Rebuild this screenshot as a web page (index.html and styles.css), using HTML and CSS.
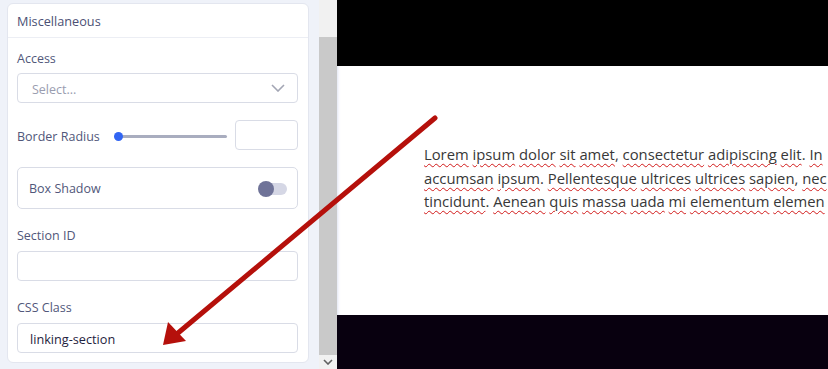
FILE: index.html
```
<!DOCTYPE html>
<html>
<head>
<meta charset="utf-8">
<title>Miscellaneous</title>
<link rel="stylesheet" href="styles.css">
</head>
<body>
<div class="sidebar">
	<div class="panel">
		<div class="card">
			<div class="card-head">Miscellaneous</div>
			<div class="card-body">
				<label class="lbl">Access</label>
				<div class="field select">
					<span class="placeholder">Select...</span>
					<svg class="chev" width="14" height="8" viewBox="0 0 14 8"><path d="M1 1 L7 7 L13 1" fill="none" stroke="#a3a6b4" stroke-width="1.6"/></svg>
				</div>

				<div class="row-radius">
					<label class="lbl">Border Radius</label>
					<div class="slider"><span class="dot"></span></div>
					<div class="field num"></div>
				</div>

				<div class="shadow-box">
					<span class="lbl">Box Shadow</span>
					<span class="toggle"><span class="knob"></span></span>
				</div>

				<label class="lbl gap">Section ID</label>
				<div class="field"></div>

				<label class="lbl gap">CSS Class</label>
				<div class="field value">linking-section</div>
			</div>
		</div>
	</div>
	<div class="scrollbar">
		<div class="track-top"></div>
		<div class="thumb"></div>
		<div class="btn-down">
			<svg width="10" height="6" viewBox="0 0 10 6"><path d="M1 1 L5 5 L9 1" fill="none" stroke="#606060" stroke-width="1.6"/></svg>
		</div>
	</div>
</div>

<div class="preview">
	<div class="band-top"></div>
	<div class="content">
		<p class="lorem">
			<span class="sp">Lorem</span> <span class="sp">ipsum</span> <span class="sp">dolor</span> <span class="sp">sit</span> <span class="sp">amet</span>, <span class="sp">consectetur</span> <span class="sp">adipiscing</span> <span class="sp">elit</span>. <span class="sp">In</span><br>
			<span class="sp">accumsan</span> <span class="sp">ipsum</span>. <span class="sp">Pellentesque</span> <span class="sp">ultrices</span> <span class="sp">ultrices</span> <span class="sp">sapien</span>, <span class="sp">nec</span><br>
			<span class="sp">tincidunt</span>. <span class="sp">Aenean</span> <span class="sp">quis</span> <span class="sp">massa</span> <span class="sp">uada</span> <span class="sp">mi</span> <span class="sp">elementum</span> <span class="sp">elemen</span>
		</p>
	</div>
	<div class="band-bottom"></div>
</div>

<svg class="arrow" width="828" height="369" viewBox="0 0 828 369">
	<line x1="435" y1="118" x2="178" y2="333" stroke="#b5100b" stroke-width="5" stroke-linecap="round"/>
	<polygon points="163,345 168,322 186,341" fill="#b5100b"/>
</svg>
</body>
</html>
```

FILE: styles.css
```
*{ margin:0; padding:0; box-sizing:border-box;}
body{
	width:828px;
	height:369px;
	overflow:hidden;
	display:flex;
	font-family:"Open Sans","Noto Sans",sans-serif;
	background:#fff;
}
.sidebar{
	display:flex;
	width:337px;
	height:369px;
	flex:none;
}
.panel{
	width:319px;
	background:#eff2f9;
	padding:3px 10px 0 7px;
}
.card{
	background:#fff;
	border:1px solid #e3e6ef;
	border-radius:6px;
	height:360px;
}
.card-head{
	height:34px;
	line-height:35px;
	padding-left:9px;
	font-size:12.7px;
	color:#4b5074;
	border-bottom:1px solid #eceef4;
}
.card-body{
	padding:11px 10px 10px 9px;
}
.lbl{
	display:block;
	font-size:12.5px;
	line-height:18px;
	color:#51577a;
	margin-bottom:6px;
}
.card-body > .lbl:first-child{
	padding-top:1px;
	margin-bottom:5px;
}
.lbl.gap{
	margin-top:18px;
}
.field{
	height:30px;
	border:1px solid #d9dce6;
	border-radius:4px;
	background:#fff;
}
.select{
	display:flex;
	align-items:center;
	justify-content:space-between;
	padding:0 12px 0 14px;
}
.placeholder{
	font-size:12.5px;
	color:#9a9db0;
	padding-top:2px;
}
.row-radius{
	display:flex;
	align-items:center;
	margin-top:17px;
}
.row-radius .lbl{
	margin:0;
	width:97px;
	padding-top:3px;
}
.slider{
	position:relative;
	width:109px;
	height:3px;
	background:#a9adbf;
	border-radius:2px;
	margin-left:4px;
	margin-top:2px;
}
.slider .dot{
	position:absolute;
	left:-4px;
	top:-3px;
	width:9px;
	height:9px;
	border-radius:50%;
	background:#3165f3;
}
.field.num{
	width:63px;
	margin-left:auto;
}
.shadow-box{
	display:flex;
	align-items:center;
	justify-content:space-between;
	height:42px;
	margin-top:17px;
	border:1px solid #d9dce6;
	border-radius:5px;
	padding:2px 10px 0 11px;
}
.shadow-box .lbl{
	margin:0;
}
.toggle{
	position:relative;
	width:28px;
	height:12px;
	background:#d5d7e5;
	border-radius:6px;
}
.toggle .knob{
	position:absolute;
	left:-1px;
	top:-2px;
	width:16px;
	height:16px;
	border-radius:50%;
	background:#6f7398;
}
.value{
	font-size:12.7px;
	line-height:30px;
	padding-left:12px;
	color:#1f2340;
}
.scrollbar{
	width:18px;
	display:flex;
	flex-direction:column;
	background:#f1f1f1;
}
.track-top{
	height:37px;
}
.thumb{
	height:318px;
	background:#c9c9c9;
}
.btn-down{
	flex:1;
	display:flex;
	align-items:center;
	justify-content:center;
}
.preview{
	flex:1;
	display:flex;
	flex-direction:column;
	height:369px;
}
.band-top{
	height:66px;
	background:#000;
}
.content{
	flex:1;
	background:#fff;
	box-shadow:inset 3px 0 3px -2px #dfe3f2;
	padding:77px 0 0 87px;
	overflow:hidden;
	white-space:nowrap;
}
.lorem{
	font-family:"Open Sans","Noto Sans",sans-serif;
	font-size:14.8px;
	line-height:23.5px;
	color:#383838;
}
.sp{
	text-decoration:underline wavy #d21a1a;
	text-decoration-thickness:1px;
	text-underline-offset:3px;
}
.band-bottom{
	height:54px;
	background:#08000f;
}
.arrow{
	position:absolute;
	left:0;
	top:0;
	pointer-events:none;
}
```
